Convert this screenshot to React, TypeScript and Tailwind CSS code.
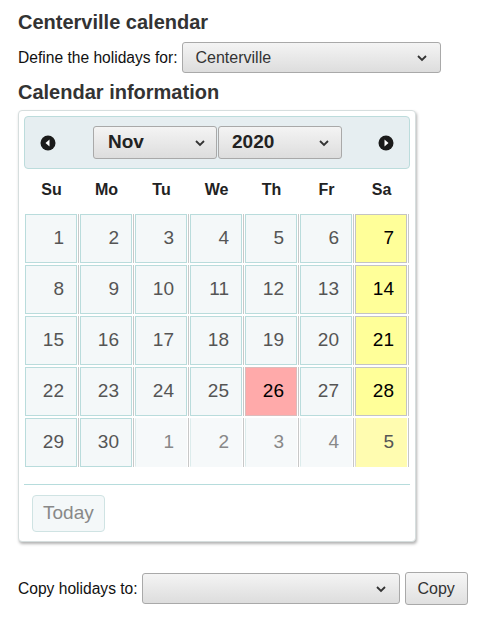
import React from "react";

type Day = { n: number; other?: boolean; sat?: boolean; today?: boolean };

const weeks: Day[][] = [
  [1, 2, 3, 4, 5, 6, 7],
  [8, 9, 10, 11, 12, 13, 14],
  [15, 16, 17, 18, 19, 20, 21],
  [22, 23, 24, 25, 26, 27, 28],
  [29, 30, 1, 2, 3, 4, 5],
].map((row, r) =>
  row.map((n, i) => ({
    n,
    other: r === 4 && i >= 2,
    sat: i === 6,
    today: n === 26,
  }))
);

const dayNames = ["Su", "Mo", "Tu", "We", "Th", "Fr", "Sa"];

function Chevron({ className = "" }: { className?: string }) {
  return (
    <svg width="12" height="8" viewBox="0 0 12 8" className={className}>
      <path d="M2 2 L6 6 L10 2" fill="none" stroke="#333" strokeWidth="1.8" />
    </svg>
  );
}

function NavIcon({ dir }: { dir: "prev" | "next" }) {
  return (
    <svg width="16" height="16" viewBox="0 0 16 16">
      <circle cx="8" cy="8" r="7.5" fill="#1a1a1a" />
      {dir === "prev" ? (
        <path d="M9.5 4.5 L5.5 8 L9.5 11.5 Z" fill="#fff" />
      ) : (
        <path d="M6.5 4.5 L10.5 8 L6.5 11.5 Z" fill="#fff" />
      )}
    </svg>
  );
}

function SelectBox({
  value,
  className,
  bold,
}: {
  value: string;
  className: string;
  bold?: boolean;
}) {
  return (
    <div
      className={`flex items-center justify-between rounded-[3px] border border-[#a9a9a9] bg-gradient-to-b from-[#f4f4f4] to-[#dddddd] ${className}`}
    >
      <span className={bold ? "font-bold text-[19px] text-[#222]" : "text-[16px] text-[#333]"}>
        {value}
      </span>
      <Chevron />
    </div>
  );
}

function Cell({ d }: { d: Day }) {
  let cls = "bg-[#f4f8f9] border-[#b9dcdc] text-[#555]";
  if (d.sat) cls = "bg-[#ffff99] border-[#c4c4c4] text-black";
  if (d.today) cls = "bg-[#ffaaaa] border-[#dcbcbc] text-black";
  if (d.other && !d.sat) cls = "bg-[#f6f9fa] border-transparent border-l-[#dcecec] text-[#888]";
  if (d.other && d.sat) cls = "bg-[#fffcb0] border-transparent border-l-[#d8d8d8] text-[#555]";
  return (
    <div className="flex w-[55px] border-r border-transparent">
      <div
        className={`flex h-[49px] w-[52px] items-center justify-end border pr-[12px] text-[19px] ${cls}`}
      >
        {d.n}
      </div>
      <div className="ml-[1px] w-[1px] bg-[#c8c8c8]" />
    </div>
  );
}

export default function App() {
  return (
    <div className="min-h-[617px] bg-white px-[18px] pt-[9px] text-black [font-family:'Liberation_Sans',Arial,sans-serif]">
      <h1 className="text-[20px] font-bold leading-[26px] text-[#333]">Centerville calendar</h1>
      <div className="mt-[7px] flex items-center gap-[4px]">
        <span className="text-[15.6px] text-[#111]">Define the holidays for:</span>
        <SelectBox value="Centerville" className="h-[31px] w-[259px] pl-[13px] pr-[12px]" />
      </div>
      <h2 className="mt-[6px] text-[20px] font-bold leading-[26px] text-[#333]">Calendar information</h2>

      <div className="mt-[5px] w-[398px] rounded-[4px] border border-[#d6dede] bg-white px-[5px] pb-[9px] pt-[5px] shadow-[1px_2px_3px_rgba(0,0,0,0.3)]">
        <div className="flex h-[53px] items-center rounded-[4px] border border-[#bcdcdc] bg-[#e6eef1] px-[15px]">
          <NavIcon dir="prev" />
          <div className="ml-[37px] flex gap-[1px]">
            <SelectBox value="Nov" bold className="h-[33px] w-[124px] pl-[14px] pr-[10px]" />
            <SelectBox value="2020" bold className="h-[33px] w-[124px] pl-[13px] pr-[11px]" />
          </div>
          <div className="ml-auto">
            <NavIcon dir="next" />
          </div>
        </div>

        <div className="flex h-[45px] items-center pb-[3px]">
          {dayNames.map((n) => (
            <div key={n} className="w-[55px] text-center text-[16px] font-bold text-[#222]">
              {n}
            </div>
          ))}
        </div>

        <div className="flex flex-col gap-[2px] pl-[1px]">
          {weeks.map((w, i) => (
            <div key={i} className="flex">
              {w.map((d, j) => (
                <Cell key={j} d={d} />
              ))}
            </div>
          ))}
        </div>

        <div className="mt-[17px] border-t border-[#b6dcdc] pt-[10px]">
          <button className="ml-[8px] h-[37px] rounded-[4px] border border-[#cfe3e3] bg-[#f4f8f9] px-[10px] text-[19px] text-[#888]">
            Today
          </button>
        </div>
      </div>

      <div className="mt-[30px] flex items-center gap-[4px]">
        <span className="text-[15.6px] text-[#111]">Copy holidays to:</span>
        <SelectBox value="" className="h-[31px] w-[258px] pl-[13px] pr-[12px]" />
        <button className="ml-[1px] h-[33px] w-[63px] rounded-[3px] border border-[#a9a9a9] bg-gradient-to-b from-[#f6f6f6] to-[#e0e0e0] text-[16px] text-[#333]">
          Copy
        </button>
      </div>
    </div>
  );
}
